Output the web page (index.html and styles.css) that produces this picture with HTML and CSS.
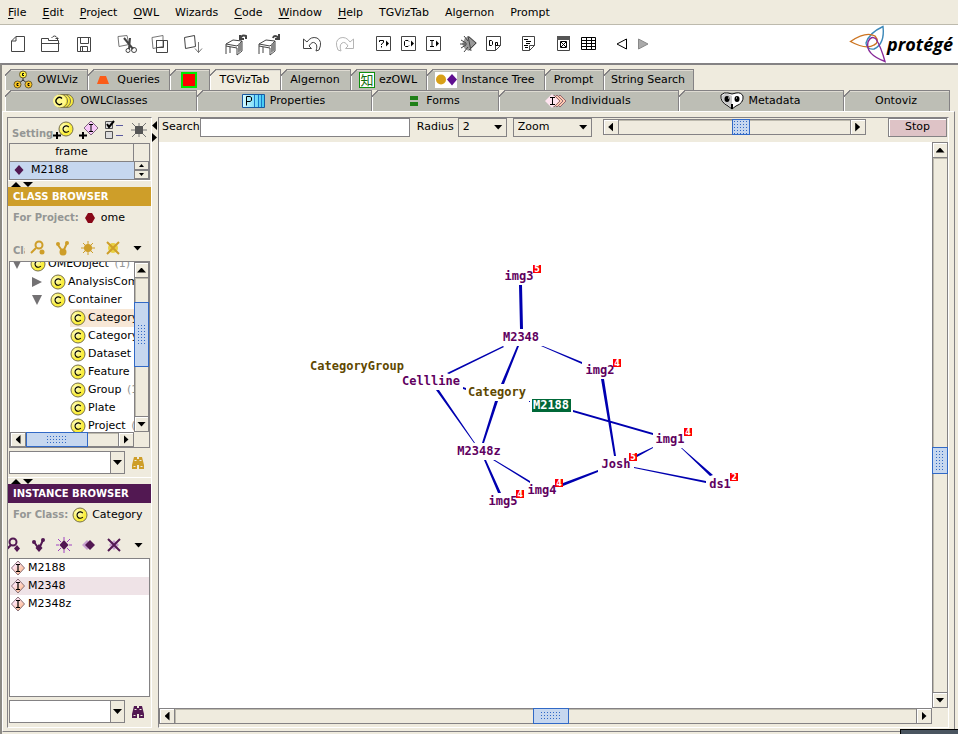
FILE: index.html
```html
<!DOCTYPE html>
<html lang="en">
<head>
<meta charset="utf-8">
<title>Protégé</title>
<link rel="stylesheet" href="styles.css">
</head>
<body>
<svg class="defs" aria-hidden="true">
  <defs>
    <radialGradient id="gy" cx=".35" cy=".35"><stop offset="0" stop-color="#ffffc8"/><stop offset="1" stop-color="#fbee3c"/></radialGradient>
    <linearGradient id="gp" x2="1" y2="1"><stop offset=".3" stop-color="#ffe4f4"/><stop offset="1" stop-color="#ffb070"/></linearGradient>
    <linearGradient id="gb"><stop offset="0" stop-color="#d8fbff"/><stop offset="1" stop-color="#3cc8f4"/></linearGradient>
    <symbol id="cls" viewBox="0 0 16 16"><circle cx="8" cy="8" r="7" fill="url(#gy)" stroke="#77704c"/><path d="M10.8 6.2A3.200 3.200 0 1 0 10.8 10" fill="none" stroke="#000" stroke-width="1.100"/></symbol>
    <symbol id="ind" viewBox="0 0 16 16"><path d="M8 1l6.500 7L8 15 1.500 8z" fill="url(#gp)" stroke="#8a7078"/><path d="M6 4.500h4M8 5v6M6 11.500h4" fill="none" stroke="#000" stroke-width="1.200"/></symbol>
    <symbol id="bino" viewBox="0 0 14 14"><path d="M3 1h3v2h2V1h3l2 8v4H8V9H6v4H1V9z" fill="currentColor"/><path d="M3.500 4.500h2M8.500 4.500h2M2.500 10.500h2M9.500 10.500h2" stroke="#efebde"/></symbol>
  </defs>
</svg>

<nav class="menubar" aria-label="Main menu">
  <button><u>F</u>ile</button><button><u>E</u>dit</button><button><u>P</u>roject</button><button><u>O</u>WL</button><button>Wizards</button><button><u>C</u>ode</button><button><u>W</u>indow</button><button><u>H</u>elp</button><button>TGVizTab</button><button>Algernon</button><button>Prompt</button>
</nav>

<header class="toolbar">
  <div class="group">
    <button aria-label="New"><svg width="16" height="20"><path d="M6 2.500h8.500v15h-13V7zM6 2.500V7H1.500" class="ln"/></svg></button>
    <button aria-label="Open"><svg width="22" height="20"><path d="M1.500 17.500v-13h7v2h10v11zM1.500 9.500h18M11.500 4q3-4 6 0v2M15.500 4.500h3" class="ln"/></svg></button>
    <button aria-label="Save"><svg width="16" height="20"><path d="M1.500 3.500h13v14h-13zM4.500 3.500v6h8v-6M4.500 17.500v-5h7v5M6.500 12.500v5" class="ln"/></svg></button>
  </div>
  <div class="group">
    <button aria-label="Cut"><svg width="22" height="20"><path d="M2 2.500l9-1 2 9-10 2z" class="lg"/><path d="M8 4l9 11M14 4l-1 11" class="ln thick"/><circle cx="12" cy="16.500" r="2" class="ln"/><circle cx="18" cy="16" r="2.500" class="ln"/></svg></button>
    <button aria-label="Copy"><svg width="20" height="20"><path d="M2 3.500l11-2v11l-10 2z" class="lg"/><path d="M6.500 6.500h11v12h-11zM6.500 6.500h7v7h-7z" class="ln"/></svg></button>
    <button aria-label="Paste"><svg width="20" height="20"><path d="M1.500 3.500l10-2 1 11-10 2z" class="ln"/><path d="M15.500 8v11M12 14.500l3.500 4 3.500-4" class="lg"/></svg></button>
  </div>
  <div class="group">
    <button aria-label="Unarchive"><svg width="24" height="24"><path d="M2 12l7-4 9 1-5 5zM2 12v10M2 14l11 2v7M13 14l5-5v10l-5 4M6 15v6" class="ln"/><path d="M14 12l4-2v8l-4 3z" fill="#888"/><path d="M16 3v4h4M16 7q2-5 6-3v3" class="ln thick"/></svg></button>
    <button aria-label="Archive"><svg width="24" height="24"><path d="M2 12l7-4 9 1-5 5zM2 12v10M2 14l11 2v7M13 14l5-5v10l-5 4M6 15v6" class="ln"/><path d="M14 12l4-2v8l-4 3z" fill="#888"/><path d="M16 6q1-4 6 0M22 2v5h-4" class="ln thick"/></svg></button>
  </div>
  <div class="group">
    <button aria-label="Undo"><svg width="20" height="20"><path d="M1.500 5v9.500h8L7 12q3-5 6-3 3 2 1 8l3-1q4-9-2-12-6-2-10 4z" class="ln"/></svg></button>
    <button aria-label="Redo"><svg width="20" height="20"><path d="M18.500 5v9.500h-8L13 12q-3-5-6-3-3 2-1 8l-3-1Q-1 7 5 4q6-2 10 4z" class="lg pale"/></svg></button>
  </div>
  <div class="group small">
    <button aria-label="Query"><svg width="16" height="16"><path d="M.5.500h14v14H.5z" class="ln"/><path d="M3.500 6V4.500h4v2l-2 1.500v1M5.500 10v1.500" class="bk"/><path d="M10 4.500v6l3-3z"/></svg></button>
    <button aria-label="Class"><svg width="16" height="16"><path d="M.5.500h14v14H.5z" class="ln"/><path d="M8 5.500L7 4.500H4.500l-1 1v4l1 1H7l1-1" class="bk"/><path d="M10 4.500v6l3-3z"/></svg></button>
    <button aria-label="Instance"><svg width="16" height="16"><path d="M.5.500h14v14H.5z" class="ln"/><path d="M4 4.500h4M6 4.500v6M4 10.500h4" class="bk"/><path d="M10 4.500v6l3-3z"/></svg></button>
  </div>
  <div class="group small">
    <button aria-label="Debug"><svg width="18" height="18"><path d="M9 1l8 7-8 8-4-2-3-5 3-6z" fill="#999"/><path d="M4 1l4 5M1 5l5 3M0 9h7M1 13l5-3M4 17l4-5M8 1l3 15M9 2l7 6-7 7" class="ln"/></svg></button>
    <button aria-label="Do"><svg width="16" height="16"><path d="M.5.500h14v9l-5 5h-9zM14.500 9.500h-5v5" class="ln"/><path d="M3.500 4.500v5h2l1-1v-3l-1-1zM9.500 6.500h2v3h-2z" class="bk"/></svg></button>
  </div>
  <div class="group small">
    <button aria-label="Script"><svg width="14" height="16"><path d="M.5.500h12v9l-5 5h-7zM12.500 9.500h-5v5" class="ln"/><path d="M2 3.500h4M4 5.500h5M4 7.500h4M2 9.500h4M3 11.500h3" class="bk"/></svg></button>
  </div>
  <div class="group small">
    <button aria-label="Window"><svg width="14" height="16"><path d="M.5.500h12v14H.5zM1 2.500h11" class="ln"/><path d="M0 0h13v4H0z" fill="#555"/><path d="M3.500 5.500h6v6h-6zM4 6l5 5M9 6l-5 5" class="bk"/></svg></button>
    <button aria-label="Table"><svg width="16" height="16"><path d="M.5 1.500h14v12H.5zM.5 4.500h14M.5 7.500h14M.5 10.500h14M5.500 1.500v12M10.500 1.500v12" class="bk"/></svg></button>
  </div>
  <div class="group step">
    <button aria-label="Back"><svg width="12" height="12"><path d="M10.500 1v10L1 6z" class="bk"/></svg></button>
    <button aria-label="Forward"><svg width="12" height="12"><path d="M1.500 1v10L11 6z" fill="#aaa" stroke="#888"/></svg></button>
  </div>
  <div class="logo">
    <svg width="38" height="38" fill="none" stroke-width="1.400"><path d="M34 1.500Q20 8 17 18q1 7 8 6Q36 19 34 1.500z" stroke="#3c88b8"/><path d="M1.500 16.500Q17 6 26 11q5 6-1 9Q17 25 1.500 16.500z" stroke="#cc7420"/><path d="M36 36.500Q16 29 19 17q3-7 8-3Q32 22 36 36.500z" stroke="#882898"/></svg>
    <span>protégé</span>
  </div>
</header>

<main class="frame">
  <div class="tabs">
    <div class="tabrow upper" role="tablist">
      <button class="tab" role="tab"><svg width="20" height="20"><path d="M10 7v4M5 14l5-4 5 4" stroke="#333" fill="none"/><g fill="#fff23c" stroke="#6a5c30"><circle cx="10" cy="4.500" r="3.500"/><circle cx="4.500" cy="14.500" r="3.500" fill="#fcc820"/><circle cx="15.500" cy="14.500" r="3.500" fill="#fcc820"/></g><path d="M11 3.500H9.500v2H11M5.500 13.500H4v2h1.500M16.500 13.500H15v2h1.500" stroke="#000" fill="none"/></svg>OWLViz</button>
      <button class="tab" role="tab"><svg width="14" height="10"><path d="M4 1h6l3 8H1z" fill="#fb5c18"/></svg><span class="lead">Queries</span></button>
      <button class="tab" role="tab" aria-label="Stop"><svg width="16" height="16"><path d="M1 1h14v14H1z" fill="#f00" stroke="#00e800" stroke-width="2"/></svg></button>
      <button class="tab on" role="tab" aria-selected="true">TGVizTab</button>
      <button class="tab" role="tab">Algernon</button>
      <button class="tab" role="tab"><span class="kanji" lang="ja">知</span>ezOWL</button>
      <button class="tab" role="tab"><svg width="22" height="16"><path d="M0 0h22v16H0z" fill="#fff"/><circle cx="6" cy="7.500" r="5" fill="#d8a018"/><path d="M17 2l5 5.500-5 6-5-6z" fill="#601090"/></svg>Instance Tree</button>
      <button class="tab" role="tab">Prompt</button>
      <button class="tab" role="tab">String Search</button>
    </div>
    <div class="tabrow lower" role="tablist">
      <button class="tab" role="tab"><svg width="24" height="16"><g fill="url(#gy)" stroke="#77704c"><circle cx="15" cy="8" r="6.500"/><circle cx="12" cy="8" r="6.500"/><circle cx="9" cy="8" r="6.500"/></g><circle cx="7.500" cy="8" r="6.500" fill="#fff88c"/><path d="M10 5.500A3.500 3.500 0 1 0 10 10.500" fill="none" stroke="#000" stroke-width="1.300"/></svg>OWLClasses</button>
      <button class="tab" role="tab"><svg width="24" height="16"><path d="M.5 1.500h22v13H.5z" fill="url(#gb)" stroke="#1858a0"/><path d="M12.500 2v12M16.500 2v12M19.500 2v12" stroke="#1878c8"/><path d="M4.500 12.500v-9H8l1.500 1v3L8 8.500H4.500" class="bk"/></svg>Properties</button>
      <button class="tab" role="tab"><svg width="10" height="10"><path d="M1 0h8v4H1zM1 6h8v4H1z" fill="#208018"/></svg><span class="lead">Forms</span></button>
      <button class="tab" role="tab"><svg width="22" height="16"><g fill="#ffc8b0" stroke="#906870"><path d="M15 2l6 6-6 6-6-6z"/><path d="M12 2l6 6-6 6-6-6z"/><path d="M9 2l6 6-6 6-6-6z"/></g><path d="M7 1l7 7-7 7-7-7z" fill="#ffe4f0"/><path d="M5 4.500h5M7.500 4.500v7M5 11.500h5" class="bk"/></svg>Individuals</button>
      <button class="tab" role="tab"><svg width="24" height="18"><path d="M1 3q3-3 7-2 4 2 8 0 5-1 7 3 1 7-7 10l-4 3-4-3Q0 10 1 3z" fill="#fff" stroke="#111"/><path d="M2 4q3-3 6-2l4 2v12l-4-3Q1 10 2 4z" fill="#c8c8c8"/><ellipse cx="7" cy="7" rx="2.500" ry="3"/><ellipse cx="17" cy="7" rx="2.500" ry="3"/><path d="M12 12v5" stroke="#000" stroke-width="2"/><path d="M8 6h1M16 6h1" stroke="#fff"/></svg>Metadata</button>
      <button class="tab" role="tab">Ontoviz</button>
    </div>
  </div>

  <div class="content">
    <aside class="side">
      <div class="settings">
        <span class="cut caption">Setting</span>
        <button aria-label="Add class"><svg width="22" height="20"><use href="#cls" x="5" y="1" width="16" height="16"/><path d="M0 15.500h8M4 12v7" stroke="#000" stroke-width="2"/></svg></button>
        <button aria-label="Add instance"><svg width="22" height="20"><path d="M13 1l7 7-7 7-7-7z" fill="#f8c8f8" stroke="#806880"/><path d="M11 4.500h4M13 4.500v7M11 11.500h4" class="bk"/><path d="M1 15.500h8M5 12v7" stroke="#000" stroke-width="2"/></svg></button>
        <button aria-label="Options"><svg width="20" height="20"><path d="M1.500 1.500h7v7h-7zM1.500 11.500h7v7h-7z" fill="#ddd" stroke="#555"/><path d="M3 4l2 3 5-6" stroke="#000" stroke-width="2" fill="none"/><path d="M12 5.500h7M12 15.500h7" stroke="#5a5aa0"/></svg></button>
        <button aria-label="Node"><svg width="16" height="16"><path d="M4 4h8v8H4z" fill="#555"/><path d="M1 1l3 3M15 1l-3 3M1 15l3-3M15 15l-3-3M0 8h4M12 8h4M8 1v3M8 12v3" stroke="#777"/></svg></button>
      </div>
      <div class="frames">
        <table>
          <thead><tr><th>frame</th></tr></thead>
          <tbody><tr><td><svg width="10" height="12"><path d="M5 1l4.500 5L5 11 .5 6z" fill="#521852"/></svg>M2188</td></tr></tbody>
        </table>
        <div class="mini"><button class="up" aria-label="Scroll up"></button><button class="down" aria-label="Scroll down"></button></div>
      </div>
      <div class="split"><i class="up"></i><i class="down"></i></div>
      <h2 class="gold">CLASS BROWSER</h2>
      <p class="for"><b>For Project:</b><svg width="14" height="10"><path d="M5 0h4l3 5-3 5H5L2 5z" fill="#880818"/></svg><span>ome</span></p>
      <div class="tools goldtools">
        <span class="caption cl">Class</span>
        <button aria-label="View class"><svg width="16" height="16"><circle cx="9" cy="5" r="3.500" class="st"/><path d="M6 8l-5 5" class="st"/><circle cx="12" cy="12" r="2.500" class="fl"/></svg></button>
        <button aria-label="Create subclass"><svg width="16" height="16"><path d="M3 5l5 7 4-9" class="st"/><circle cx="3" cy="4" r="2" class="fl"/><circle cx="12" cy="3" r="2" class="fl"/><circle cx="8" cy="12" r="3.500" class="fl"/></svg></button>
        <button aria-label="Create class"><svg width="16" height="16"><circle cx="8" cy="8" r="4" class="fl"/><path d="M8 1v14M1 8h14M3 3l10 10M13 3L3 13" stroke="currentColor"/></svg></button>
        <button aria-label="Delete class"><svg width="16" height="16"><circle cx="8" cy="8" r="5" fill="#e8d040"/><path d="M2 2l12 12M14 2L2 14" class="st"/></svg></button>
        <button aria-label="More" class="more down"></button>
      </div>
      <div class="treebox">
        <ul class="tree">
          <li class="l1"><i class="open"></i><svg width="16" height="16"><use href="#cls"/></svg>OMEObject <em>(1)</em></li>
          <li class="l2"><i class="shut"></i><svg width="16" height="16"><use href="#cls"/></svg>AnalysisComponent</li>
          <li class="l2"><i class="open"></i><svg width="16" height="16"><use href="#cls"/></svg>Container</li>
          <li class="l3 picked"><svg width="16" height="16"><use href="#cls"/></svg>Category</li>
          <li class="l3"><svg width="16" height="16"><use href="#cls"/></svg>CategoryGroup</li>
          <li class="l3"><svg width="16" height="16"><use href="#cls"/></svg>Dataset</li>
          <li class="l3"><svg width="16" height="16"><use href="#cls"/></svg>Feature</li>
          <li class="l3"><svg width="16" height="16"><use href="#cls"/></svg>Group <em>(1)</em></li>
          <li class="l3"><svg width="16" height="16"><use href="#cls"/></svg>Plate</li>
          <li class="l3"><svg width="16" height="16"><use href="#cls"/></svg>Project <em>(1)</em></li>
        </ul>
        <div class="vbar tv"><button class="up" aria-label="Up"></button><div class="track"><div class="thumb"></div></div><button class="down" aria-label="Down"></button></div>
        <div class="hbar th"><button class="left" aria-label="Left"></button><div class="track"><div class="thumb"></div></div><button class="right" aria-label="Right"></button></div>
      </div>
      <div class="find">
        <span class="combo down"><select aria-label="Find class"><option></option></select></span>
        <button aria-label="Find class" class="goldink"><svg width="14" height="14"><use href="#bino"/></svg></button>
      </div>
      <div class="split"><i class="up"></i><i class="down"></i></div>
      <h2 class="plum">INSTANCE BROWSER</h2>
      <p class="for"><b>For Class:</b><svg width="16" height="16"><use href="#cls"/></svg><span>Category</span></p>
      <div class="tools plumtools">
        <button aria-label="View instance"><svg width="16" height="16"><circle cx="7" cy="5" r="3.500" class="st"/><path d="M5 8l-4 4" class="st"/><path d="M11 8l3 3.500-3 3.500-3-3.500z" class="fl"/></svg></button>
        <button aria-label="Instance references"><svg width="16" height="16"><path d="M3 5l5 7 4-9" class="st"/><circle cx="3" cy="5" r="2" class="fl"/><circle cx="12" cy="3" r="2" class="fl"/><path d="M8 7l3.500 4L8 15l-3.500-4z" class="fl"/></svg></button>
        <button aria-label="Create instance"><svg width="16" height="16"><path d="M8 3l4.500 5L8 13 3.500 8z" class="fl"/><path d="M8 0v3M8 13v3M0 8h3M13 8h3M2 2l3 3M14 2l-3 3M2 14l3-3M14 14l-3-3" stroke="#a040c0"/></svg></button>
        <button aria-label="Copy instance"><svg width="16" height="16"><path d="M6 3l5 5-5 5-5-5z" fill="#c8a0d0"/><path d="M9 3l5 5-5 5-5-5z" class="fl"/></svg></button>
        <button aria-label="Delete instance"><svg width="16" height="16"><path d="M8 3l5 5-5 5-5-5z" fill="#c8a0d0"/><path d="M2 2l12 12M14 2L2 14" class="st"/></svg></button>
        <button aria-label="More" class="more down"></button>
      </div>
      <ul class="list">
        <li><svg width="16" height="16"><use href="#ind"/></svg>M2188</li>
        <li class="picked"><svg width="16" height="16"><use href="#ind"/></svg>M2348</li>
        <li><svg width="16" height="16"><use href="#ind"/></svg>M2348z</li>
      </ul>
      <div class="find last">
        <span class="combo down"><select aria-label="Find instance"><option></option></select></span>
        <button aria-label="Find instance" class="plumink"><svg width="14" height="14"><use href="#bino"/></svg></button>
      </div>
    </aside>

    <div class="divider"><i class="left"></i><i class="right"></i></div>

    <section class="viz">
      <form class="controls">
        <label for="q">Search</label><input id="q" type="text">
        <label for="radius" class="rad">Radius</label>
        <span class="pick down r"><select id="radius"><option>2</option></select></span>
        <span class="pick down z"><select aria-label="Zoom mode"><option>Zoom</option></select></span>
        <div class="zoombar"><button type="button" class="left" aria-label="Less"></button><input type="range" aria-label="Zoom level" min="0" max="100" value="53"><button type="button" class="right" aria-label="More"></button></div>
        <button type="button" class="stop">Stop</button>
      </form>
      <svg class="graph"><g transform="translate(-159 -142)">
        <g class="edges">
          <path d="M519 285h3l1 44h-3zM503 346l1 1-55 27-2-1zM517 346h2l-15 38h-3zM436 390h3l36 53h-1zM495 401h3l-14 42h-2zM463 387l3 1v2l-3-1zM493 460h2l35 21v2zM484 460h2l15 33h-3zM563 483l35-13v2l-35 14zM541 346h2l39 16v2zM601 379h3l12 77h-2zM573 410l80 23v2l-80-23zM653 447v1l-16 9-1-2zM681 448h1l31 27-3 1zM634 467l72 14v2l-72-15zM529 401h1v1h-1z"/>
        </g>
        <g class="nodes">
          <text x="519" y="280">img3</text><text x="521" y="341">M2348</text><text x="600" y="374">img2</text><text x="431" y="385">Cellline</text>
          <text x="479" y="455">M2348z</text><text x="670" y="443">img1</text><text x="616" y="468">Josh</text><text x="720" y="488">ds1</text><text x="542" y="494">img4</text><text x="503" y="505">img5</text>
          <g class="kind"><text x="357" y="370">CategoryGroup</text><text x="497" y="396">Category</text></g>
          <rect x="532" y="399" width="39" height="13"/><text class="focus" x="551" y="409">M2188</text>
        </g>
        <g class="badges">
          <path d="M533 265h8v8h-8zM613 359h8v8h-8zM684 428h8v8h-8zM629 453h8v8h-8zM730 473h8v8h-8zM555 479h8v8h-8zM516 490h8v8h-8z"/>
          <text x="537" y="272">5</text><text x="617" y="366">4</text><text x="688" y="435">4</text><text x="633" y="460">5</text><text x="734" y="480">2</text><text x="559" y="486">4</text><text x="520" y="497">4</text>
        </g>
      </g></svg>
      <div class="vbar mv"><button class="up" aria-label="Up"></button><div class="track"><div class="thumb"></div></div><button class="down" aria-label="Down"></button></div>
      <div class="hbar mh"><button class="left" aria-label="Left"></button><div class="track"><div class="thumb"></div></div><button class="right" aria-label="Right"></button></div>
    </section>
  </div>
  <div class="corner"></div>
</main>
</body>
</html>
```
FILE: styles.css
```css
:root {
  --face: #efebde;
  --line: #848284;
  --tab: #bdbeb5;
  --blue: #c6d7ef;
  --rim: #3169c6;
}
* { box-sizing: border-box; }
body {
  margin: 0;
  height: 100vh;
  min-height: 600px;
  display: flex;
  flex-direction: column;
  overflow: hidden;
  background: var(--face);
  color: #000;
  font: 11px/16px "DejaVu Sans", sans-serif;
}
button, input, select { font: inherit; color: inherit; border-radius: 0; margin: 0; }
button { padding: 0; border: 0; background: none; }
svg { display: block; flex: none; }
.defs { position: absolute; width: 0; height: 0; }
ul, p, h2 { margin: 0; padding: 0; list-style: none; }

.ln { fill: none; stroke: #444; }
.lg { fill: none; stroke: #777; }
.thick { stroke-width: 2; }
.pale { stroke: #b4b4b4; }
.bk { fill: none; stroke: #000; }
.st { fill: none; stroke: currentColor; stroke-width: 2; }
.fl { fill: currentColor; }

/* Menu and toolbar */
.menubar {
  flex: none;
  height: 25px;
  display: flex;
  gap: 16px;
  padding: 1px 8px 0;
  align-items: center;
  border-bottom: 1px solid #bdbaad;
}
.menubar u { text-underline-offset: 2px; }
.toolbar {
  flex: none;
  height: 38px;
  display: flex;
  gap: 10px;
  padding-left: 1px;
  background: #fff;
}
.group { display: flex; }
.group button { width: 33px; display: grid; place-items: center; }
.small button { width: 25px; }
.step button { width: 21px; }
.logo {
  margin-left: auto;
  padding-right: 5px;
  display: flex;
  align-items: center;
  font: italic bold 18px/24px "Open Sans", sans-serif;
}

/* Tabs */
.frame {
  flex: 1;
  min-height: 0;
  display: flex;
  flex-direction: column;
  position: relative;
  padding: 4px 3px 2px 0;
  border-top: 2px solid var(--line);
  border-left: 2px solid #8c8a84;
}
.tabs { padding: 0 5px 0 3px; }
.tabrow { display: grid; height: 21px; }
.upper { grid-template-columns: 83px 82px 40px 71px 70px 76px 118px 59px 90px; }
.lower { grid-template-columns: 192fr 175fr 127fr 180fr 165fr 106fr; }
.tab {
  display: flex;
  align-items: center;
  justify-content: center;
  gap: 4px;
  min-width: 0;
  padding-right: 2px;
  white-space: nowrap;
  background:
    linear-gradient(135deg, var(--face) 0 4px, var(--line) 4px 5px, transparent 5px) 0 0 / 7px 7px no-repeat,
    linear-gradient(var(--line), var(--line)) 0 0 / 100% 1px no-repeat,
    linear-gradient(var(--line), var(--line)) 100% 0 / 1px 100% no-repeat,
    linear-gradient(#dedbd2, #dedbd2) 0 1px / 100% 1px no-repeat,
    linear-gradient(#fff, #fff) 0 0 / 1px 100% no-repeat,
    var(--tab);
}
.tab.on { background-color: var(--face); }
.lead { padding-left: 3px; }
.kanji {
  width: 16px;
  height: 16px;
  border: 1px solid #109010;
  background: #fff;
  color: #107010;
  font: 13px/13px "Noto Sans CJK JP", sans-serif;
}

.content {
  flex: 1;
  min-height: 0;
  display: flex;
  padding: 5px 5px 3px 4px;
  border: solid var(--line);
  border-width: 1px;
  border-top-color: #fff;
  border-left-color: #fff;
}
.corner {
  position: absolute;
  right: 0;
  bottom: 0;
  width: 58px;
  height: 5px;
  background: #4a5560;
  border: solid #000;
  border-width: 1px 0 0 1px;
}

/* Small arrows shared by scroll bars, combos and splitters */
.up::before, .down::before, .left::before, .right::before {
  content: "";
  display: block;
  width: 9px;
  height: 5px;
  background: #000;
}
.up::before { clip-path: polygon(50% 0, 100% 100%, 0 100%); }
.down::before { clip-path: polygon(0 0, 100% 0, 50% 100%); }
.left::before, .right::before { width: 5px; height: 9px; }
.left::before { clip-path: polygon(100% 0, 100% 100%, 0 50%); }
.right::before { clip-path: polygon(0 0, 100% 50%, 0 100%); }

.vbar, .hbar { display: flex; background: var(--face); }
.vbar { flex-direction: column; width: 100%; }
.hbar { height: 16px; }
.vbar button, .hbar button, .zoombar button {
  flex: none;
  width: 16px;
  height: 16px;
  display: grid;
  place-items: center;
  border: 1px solid var(--line);
  box-shadow: inset 1px 1px #fff;
}
.vbar button { width: 100%; }
.track { flex: 1; min-width: 0; min-height: 0; display: flex; border: 1px solid var(--line); box-shadow: inset 1px 1px #bdbaad; }
.vbar .track { flex-direction: column; border-width: 0 1px; }
.hbar .track { border-width: 1px 0; }
.track::before, .track::after { content: ""; }
.thumb {
  flex: none;
  border: 1px solid var(--rim);
  display: grid;
  place-items: center;
  background: var(--blue);
}
.thumb::before { content: ""; width: 22px; height: 10px; background: radial-gradient(circle, var(--rim) 0 0.5px, transparent 1px) 0 0 / 3px 3px; }
.vbar .thumb { margin: 0 -1px; }
.hbar .thumb { margin: -1px 0; }
.vbar .thumb::before { width: 10px; height: 22px; }

/* Side column */
.side {
  flex: none;
  width: 145px;
  display: flex;
  flex-direction: column;
  overflow: hidden;
  border: 1px solid #fff;
  border-top-color: var(--line);
  border-left-color: var(--line);
}
.caption { font-weight: bold; font-size: 10px; color: #949694; }
.settings { flex: none; height: 25px; display: flex; align-items: center; padding-left: 4px; }
.settings .cut { width: 39px; padding-top: 6px; flex: none; }
.settings button { width: 25px; padding-bottom: 2px; display: grid; place-items: center; flex: none; }
.frames {
  flex: none;
  height: 37px;
  display: flex;
  margin: 0 1px;
  border: 1px solid var(--line);
}
.frames table { width: 124px; border-collapse: collapse; }
.frames th { height: 17px; padding: 0; font-weight: normal; border: solid var(--line); border-width: 0 1px 1px 0; }
.frames td { padding: 0 4px; height: 17px; background: var(--blue); }
.frames td svg { float: left; margin: 2px 7px 0 0; }
.mini { flex: 1; padding-top: 17px; display: flex; flex-direction: column; }
.mini button { flex: 1; display: grid; place-items: center; border: 1px solid var(--line); background: var(--face); }
.mini button::before { width: 5px; height: 3px; }
.split { flex: none; height: 7px; display: flex; gap: 2px; padding: 1px 0 0 3px; border-top: 1px solid #fff; }
.split .up::before, .split .down::before { width: 10px; height: 5px; }
h2 { flex: none; height: 19px; padding-left: 5px; font: bold 10px/19px "DejaVu Sans", sans-serif; color: #fff; white-space: nowrap; }
.gold { background: #ce9e29; }
.plum { background: #521852; }
.for { flex: none; height: 24px; display: flex; align-items: center; padding-left: 5px; gap: 4px; white-space: nowrap; }
.for b { font-size: 10px; color: #949694; }
.tools { flex: none; display: flex; align-items: center; height: 31px; }
.tools button { flex: none; width: 25px; display: grid; place-items: center; }
.goldtools { color: #ce9e29; padding-left: 5px; padding-top: 5px; }
.goldtools .cl { width: 12px; flex: none; padding-top: 6px; overflow: hidden; }
.plumtools { color: #521852; padding-top: 5px; justify-content: flex-end; }
.treebox {
  flex: none;
  height: 187px;
  margin: 0 1px;
  display: grid;
  grid-template: minmax(0, 1fr) 15px / minmax(0, 1fr) 15px;
  border: 1px solid var(--line);
}
.treebox .hbar, .treebox .hbar button { height: 15px; }
.tree { background: #fff; overflow: hidden; }
.tree li, .list li { display: flex; align-items: center; height: 18px; gap: 2px; white-space: pre; }
.tree li:first-child { margin-top: -7px; }
.tree em { font-style: normal; color: #949694; }
.tree i { flex: none; width: 10px; height: 10px; background: #737173; margin-right: 6px; }
.open { clip-path: polygon(0 0, 100% 0, 50% 100%); }
.shut { clip-path: polygon(0 0, 100% 50%, 0 100%); }
.l1 { padding-left: 2px; }
.l2 { padding-left: 22px; }
.l3 { margin-left: 60px; }
.tree .picked { background: #f7e7d6; }
.tv .track::before { flex: 25; }
.tv .thumb { flex: 65; }
.tv .track::after { flex: 50; }
.th .thumb { flex: 62; }
.th .track::after { flex: 31; }
.find { flex: none; height: 29px; display: flex; align-items: center; padding: 0 1px; }
.combo { position: relative; width: 116px; height: 23px; }
.find button { flex: 1; display: grid; place-items: center; }
.goldink { color: #ce9e29; }
.plumink { color: #521852; }
select { appearance: none; width: 100%; height: 100%; padding: 0 4px; border: 1px solid var(--line); background: var(--face); outline: 0; }
.combo select { background: linear-gradient(90deg, #fff calc(100% - 14px), var(--line) calc(100% - 14px) calc(100% - 13px), var(--face) calc(100% - 13px)); }
.combo::before, .pick::before { position: absolute; right: 3px; top: 9px; pointer-events: none; }
.list { flex: 1; min-height: 0; margin: 0 1px; background: #fff; border: 1px solid var(--line); }
.list .picked { background: #efe3e7; }
.last { margin-bottom: 1px; }

.divider { flex: none; width: 6px; padding-top: 4px; display: flex; flex-direction: column; gap: 3px; }
.divider .left::before, .divider .right::before { height: 9px; }

/* Graph column */
.viz {
  flex: 1;
  min-width: 0;
  display: grid;
  grid-template: 24px minmax(0, 1fr) 16px / minmax(0, 1fr) 16px;
  padding-bottom: 3px;
  border: 1px solid #fff;
  border-top-color: var(--line);
  border-left-color: var(--line);
}
.controls { grid-column: 1 / 3; display: flex; align-items: center; padding: 0 1px 6px 3px; }
.controls > input { flex: 0 1 210px; min-width: 60px; height: 19px; border: 1px solid var(--line); background: #fff; outline: 0; }
.rad { padding: 0 4px 0 7px; }
.pick { position: relative; height: 19px; }
.pick::before { top: 7px; right: 4px; }
.pick.r { width: 49px; margin-right: 6px; }
.pick.z { width: 79px; margin-right: 11px; }
.zoombar { flex: 0 1 263px; min-width: 100px; display: flex; }
.zoombar input { flex: 1; min-width: 0; height: 16px; appearance: none; background: none; border: solid var(--line); border-width: 1px 0; box-shadow: inset 0 1px #bdbaad; }
.zoombar input::-webkit-slider-thumb {
  appearance: none;
  width: 18px;
  height: 16px;
  border: 1px solid var(--rim);
  background: radial-gradient(circle, var(--rim) 0 0.5px, transparent 1px) 0 0 / 3px 3px, var(--blue);
}
.stop { width: 59px; height: 19px; margin-left: auto; background: #dec3c6; border: 1px solid var(--line); box-shadow: inset 1px 1px #fff; }
.graph { width: 100%; height: 100%; background: #fff; }
.edges { fill: #0000b0; }
.nodes { font: bold 12px "DejaVu Sans Mono", monospace; text-anchor: middle; fill: #600060; }
.nodes .kind { fill: #604800; }
.nodes rect { fill: #006838; }
.nodes .focus { fill: #fff; }
.badges { fill: #f00; font: bold 8px "DejaVu Sans", sans-serif; text-anchor: middle; }
.badges text { fill: #fff; }
.mv .track::before { flex: 290; }
.mv .thumb { flex: 25; }
.mv .track::after { flex: 218; }
.mh .track::before { flex: 358; }
.mh .thumb { flex: 35; }
.mh .track::after { flex: 347; }
```
